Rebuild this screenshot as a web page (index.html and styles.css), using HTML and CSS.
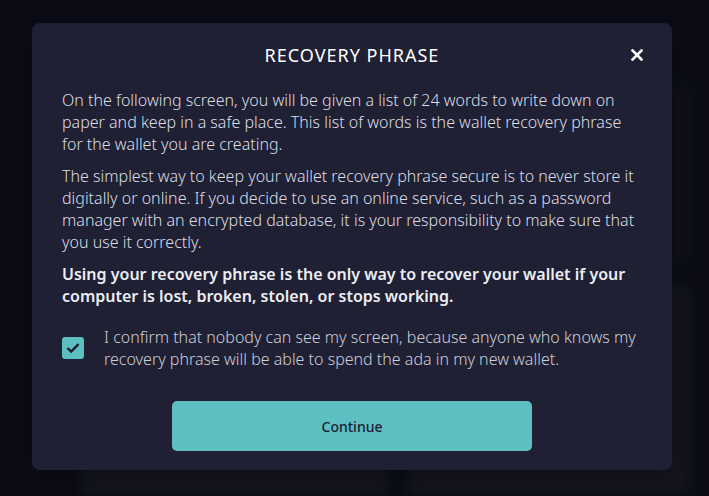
FILE: index.html
```html
<!DOCTYPE html>
<html lang="en">
<head>
  <meta charset="UTF-8" />
  <title>Recovery Phrase</title>
  <meta name="viewport" content="width=device-width, initial-scale=1" />
  <link rel="stylesheet" href="styles.css">
</head>
<body>

  <div class="backdrop">
    <div class="ghost-card ghost-left"></div>
    <div class="ghost-col">
      <div class="ghost-card ghost-top"></div>
      <div class="ghost-card ghost-bottom"></div>
    </div>
  </div>

  <div class="overlay">
    <div class="modal">
      <div class="modal-head">
        <h2>RECOVERY PHRASE</h2>
        <button class="close" type="button" aria-label="Close">
          <svg width="12" height="12" viewBox="0 0 12 12">
            <path d="M1.5 1.5 L10.5 10.5 M10.5 1.5 L1.5 10.5" stroke="#fff" stroke-width="2.6" stroke-linecap="square" />
          </svg>
        </button>
      </div>

      <p>On the following screen, you will be given a list of 24 words to write down on paper and keep in a safe place. This list of words is the wallet recovery phrase for the wallet you are creating.</p>
      <p>The simplest way to keep your wallet recovery phrase secure is to never store it digitally or online. If you decide to use an online service, such as a password manager with an encrypted database, it is your responsibility to make sure that you use it correctly.</p>
      <p class="strong">Using your recovery phrase is the only way to recover your wallet if your computer is lost, broken, stolen, or stops working.</p>

      <label class="confirm">
        <span class="check">
          <svg width="14" height="12" viewBox="0 0 14 12">
            <path d="M1.5 6 L5.2 9.6 L12.5 2.2" fill="none" stroke="#1b1c2c" stroke-width="2.4" />
          </svg>
        </span>
        <span class="confirm-text">I confirm that nobody can see my screen, because anyone who knows my recovery phrase will be able to spend the ada in my new wallet.</span>
      </label>

      <div class="actions">
        <button class="continue" type="button">Continue</button>
      </div>
    </div>
  </div>

</body>
</html>
```

FILE: styles.css
```css
* { box-sizing: border-box; }
html, body {
  margin: 0; padding: 0;
  width: 709px; height: 496px;
  overflow: hidden;
  background: #0b0c16;
  font-family: 'Noto Sans', 'Open Sans', sans-serif;
  color: #dcdde5;
}
body { position: relative; }

/* blurred page behind the dialog */
.backdrop {
  display: flex; gap: 16px;
  padding: 80px 18px 0 80px;
  height: 100%;
  filter: blur(6px);
}
.ghost-card { background: #14151f; border-radius: 8px; }
.ghost-left { width: 310px; margin-top: 360px; }
.ghost-col { flex: 1; display: flex; flex-direction: column; gap: 14px; }
.ghost-top { height: 190px; background: #0f1019; }
.ghost-bottom { flex: 1; }

.overlay {
  position: absolute; inset: 0;
  display: flex; justify-content: flex-start;
  padding: 23px 0 0 32px;
}
.modal {
  width: 640px; height: 447px;
  background: #1f2033;
  border-radius: 8px;
  padding: 17px 30px 19px;
  box-shadow: 0 6px 28px rgba(0, 0, 0, 0.35);
}
.modal-head {
  position: relative;
  display: flex; justify-content: center;
  margin-bottom: 19px;
}
h2 {
  margin: 0;
  font-size: 18px; font-weight: 400;
  line-height: 30px;
  letter-spacing: 1px;
  color: #fff;
}
.close {
  position: absolute; right: -1px; top: 9px;
  width: 12px; height: 12px;
  padding: 0; border: none; background: none;
  display: flex; cursor: pointer;
}
p {
  margin: 0 0 10px;
  font-size: 16px; line-height: 22px;
  font-weight: 300;
}
p.strong { font-weight: 600; color: #ecedf2; margin-bottom: 19px; }

.confirm {
  display: flex; align-items: center; gap: 20px;
  cursor: pointer;
}
.check {
  flex: none;
  width: 22px; height: 22px;
  border-radius: 3px;
  background: #5ebfc1;
  display: flex; align-items: center; justify-content: center;
}
.confirm-text {
  font-size: 16px; line-height: 22px;
  font-weight: 300;
  color: #cdced8;
}

.actions { display: flex; justify-content: center; margin-top: 31px; }
.continue {
  width: 360px; height: 50px;
  background: #5dbfc2;
  border: none; border-radius: 5px;
  font-family: inherit; font-size: 14px; font-weight: 500;
  color: #1f2033;
  cursor: pointer;
}
```
